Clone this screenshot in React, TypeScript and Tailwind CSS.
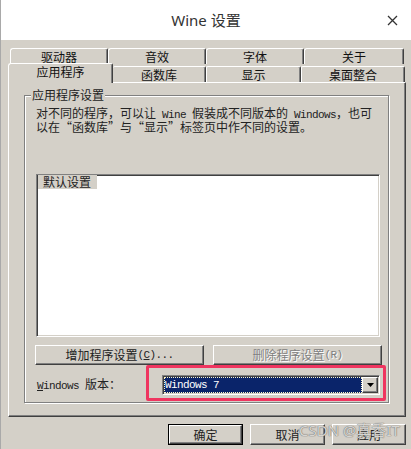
import React from "react";

const raised =
  "border border-t-white border-l-white border-r-[#404040] border-b-[#404040] shadow-[inset_-1px_-1px_0_#808080]";
const sunken =
  "border border-t-[#808080] border-l-[#808080] border-r-white border-b-white shadow-[inset_1px_1px_0_#404040,inset_-1px_-1px_0_#d4d0c8]";

function M({ children }: { children: React.ReactNode }) {
  return (
    <span className="font-['Liberation_Mono',monospace] text-[11px] tracking-[-0.6px]">
      {children}
    </span>
  );
}

function BackTab({ label, w }: { label: string; w: string }) {
  return (
    <div
      className={`${w} h-[16px] flex items-center justify-center rounded-tl-[3px] rounded-tr-[2px] border-t border-l border-r border-t-white border-l-white border-r-[#404040] shadow-[inset_-1px_0_0_#808080] text-[12px] leading-none`}
    >
      {label}
    </div>
  );
}

export default function App() {
  return (
    <div className="relative w-[411px] h-[449px] overflow-hidden bg-[#d4d0c8] border-l border-l-[#a9a9a9] font-['Noto_Sans_CJK_SC',sans-serif] text-[#111]">
      {/* Title bar */}
      <div className="relative h-[40px] bg-white flex items-center justify-center">
        <span className="font-['Noto_Sans','Noto_Sans_CJK_SC',sans-serif] text-[15px] text-[#333]">
          Wine 设置
        </span>
        <svg
          className="absolute right-[13px] top-[15px]"
          width="11"
          height="11"
          viewBox="0 0 11 11"
        >
          <path d="M1 1L10 10M10 1L1 10" stroke="#333" strokeWidth="1.3" fill="none" />
        </svg>
      </div>

      {/* Tabs back row */}
      <div className="mt-[8px] pl-[9px] flex">
        <BackTab label="驱动器" w="w-[98px]" />
        <BackTab label="音效" w="w-[98px]" />
        <BackTab label="字体" w="w-[98px]" />
        <BackTab label="关于" w="w-[100px]" />
      </div>

      {/* Tabs front row */}
      <div className="h-[18px] pl-[7px] flex items-end">
        <div className="relative z-10 top-[1px] h-[20px] w-[105px] bg-[#d4d0c8] border-t border-l border-r border-t-white border-l-white border-r-[#404040] shadow-[inset_-1px_0_0_#808080] rounded-tl-[3px] rounded-tr-[2px] flex items-center justify-center pb-[3px] text-[12px] leading-none">
          应用程序
        </div>
        <div className="w-[93px] h-[16px] flex items-center justify-center rounded-tl-[2px] rounded-tr-[2px] border-t border-r border-t-white border-r-[#404040] shadow-[inset_-1px_0_0_#808080] text-[12px] leading-none">
          函数库
        </div>
        <div className="w-[95px] h-[16px] flex items-center justify-center rounded-tl-[2px] rounded-tr-[2px] border-t border-l border-r border-t-white border-l-white border-r-[#404040] shadow-[inset_-1px_0_0_#808080] text-[12px] leading-none">
          显示
        </div>
        <div className="w-[104px] h-[16px] flex items-center justify-center rounded-tl-[2px] rounded-tr-[2px] border-t border-l border-r border-t-white border-l-white border-r-[#404040] shadow-[inset_-1px_0_0_#808080] text-[12px] leading-none">
          桌面整合
        </div>
      </div>

      {/* Panel */}
      <div className={`ml-[7px] w-[398px] h-[335px] ${raised}`}>
        <fieldset className="ml-[15px] mt-[5px] w-[365px] border border-[#808080] shadow-[1px_1px_0_white,inset_1px_1px_0_white] pb-[7px]">
          <legend className="ml-[6px] px-[1px] bg-[#d4d0c8] text-[12px] leading-[14px] text-[#222]">
            应用程序设置
          </legend>

          <div className="pl-[11px] mt-[5px] text-[12px] leading-[12px] whitespace-nowrap text-[#222]">
            <div>
              对不同的程序，可以让<M> Wine </M>假装成不同版本的<M> Windows</M>，也可
            </div>
            <div>以在“函数库”与“显示”标签页中作不同的设置。</div>
          </div>

          <div className={`ml-[11px] mt-[41px] w-[344px] h-[163px] bg-white ${sunken} pl-[1px]`}>
            <div className="w-[59px] h-[14px] pl-[5px] bg-[#d4d0c8] text-[12px] leading-[14px] text-[#222]">
              默认设置
            </div>
          </div>

          <div className="ml-[10px] mt-[8px] flex gap-[9px]">
            <button
              className={`w-[169px] h-[20px] ${raised} bg-[#d4d0c8] flex items-center justify-center text-[12px] leading-none text-[#222]`}
            >
              增加程序设置
              <M>
                (<u>C</u>)...
              </M>
            </button>
            <button
              className={`w-[169px] h-[20px] ${raised} bg-[#d4d0c8] flex items-center justify-center text-[12px] leading-none text-[#808080] [text-shadow:1px_1px_0_white]`}
            >
              删除程序设置
              <M>(R)</M>
            </button>
          </div>

          <div className="mt-[10px] flex items-center">
            <div className="ml-[12px] w-[125px] text-[12px] leading-none whitespace-nowrap text-[#222]">
              <M>
                <u>W</u>indows{" "}
              </M>
              版本：
            </div>
            <div className={`w-[218px] h-[20px] flex ${sunken} p-[1px] bg-white`}>
              <div className="flex-1 flex items-center bg-[#0a246a] border border-dotted border-[#fff6c8] text-white leading-none">
                <M>Windows 7</M>
              </div>
              <div
                className={`w-[16px] ${raised} bg-[#d4d0c8] flex items-center justify-center`}
              >
                <svg width="7" height="4" viewBox="0 0 7 4">
                  <path d="M0 0H7L3.5 4Z" fill="#000" />
                </svg>
              </div>
            </div>
          </div>
        </fieldset>
      </div>

      {/* Bottom buttons */}
      <div className="mt-[7px] pr-[5px] flex justify-end gap-[7px]">
        <button className="w-[75px] h-[21px] border border-black bg-[#d4d0c8] p-0">
          <div
            className={`h-full ${raised} flex items-center justify-center text-[12px] leading-none text-[#222]`}
          >
            确定
          </div>
        </button>
        <button
          className={`w-[75px] h-[21px] ${raised} bg-[#d4d0c8] flex items-center justify-center text-[12px] leading-none text-[#222]`}
        >
          取消
        </button>
        <button
          className={`w-[74px] h-[21px] ${raised} bg-[#d4d0c8] flex items-center justify-center text-[12px] leading-none text-[#222]`}
        >
          应用
        </button>
      </div>

      {/* Annotation highlight */}
      <div className="absolute left-[145px] top-[365px] w-[240px] h-[36px] border-[3px] border-[#ef3560] rounded-[2px]" />

      {/* Watermark */}
      <div className="absolute left-[298px] top-[420px] font-['Noto_Sans','Noto_Sans_CJK_SC',sans-serif] text-[15px] leading-[20px] text-[#e6e4e0]/90 [text-shadow:0_0_1px_#6a6a6a,0_0_1px_#6a6a6a] whitespace-nowrap">
        CSDN @真香IT
      </div>
    </div>
  );
}
